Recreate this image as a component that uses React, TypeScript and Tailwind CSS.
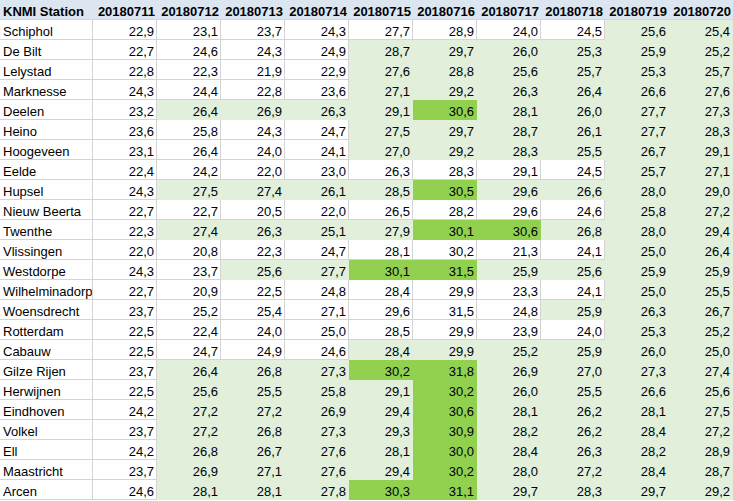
import React from 'react';

type Row = { name: string; values: string[]; fill: string };

const dates = ['20180711', '20180712', '20180713', '20180714', '20180715', '20180716', '20180717', '20180718', '20180719', '20180720'];

// W = no fill, L = light green (warm), G = bright green (>= 30)
const rows: Row[] = [
  { name: 'Schiphol', values: ['22,9', '23,1', '23,7', '24,3', '27,7', '28,9', '24,0', '24,5', '25,6', '25,4'], fill: 'WWWWWWWWLL' },
  { name: 'De Bilt', values: ['22,7', '24,6', '24,3', '24,9', '28,7', '29,7', '26,0', '25,3', '25,9', '25,2'], fill: 'WWWWLLLLLL' },
  { name: 'Lelystad', values: ['22,8', '22,3', '21,9', '22,9', '27,6', '28,8', '25,6', '25,7', '25,3', '25,7'], fill: 'WWWWLLLLLL' },
  { name: 'Marknesse', values: ['24,3', '24,4', '22,8', '23,6', '27,1', '29,2', '26,3', '26,4', '26,6', '27,6'], fill: 'WWWWLLLLLL' },
  { name: 'Deelen', values: ['23,2', '26,4', '26,9', '26,3', '29,1', '30,6', '28,1', '26,0', '27,7', '27,3'], fill: 'WLLLLGLLLL' },
  { name: 'Heino', values: ['23,6', '25,8', '24,3', '24,7', '27,5', '29,7', '28,7', '26,1', '27,7', '28,3'], fill: 'WWWWLLLLLL' },
  { name: 'Hoogeveen', values: ['23,1', '26,4', '24,0', '24,1', '27,0', '29,2', '28,3', '25,5', '26,7', '29,1'], fill: 'WWWWLLLLLL' },
  { name: 'Eelde', values: ['22,4', '24,2', '22,0', '23,0', '26,3', '28,3', '29,1', '24,5', '25,7', '27,1'], fill: 'WWWWWWWWLL' },
  { name: 'Hupsel', values: ['24,3', '27,5', '27,4', '26,1', '28,5', '30,5', '29,6', '26,6', '28,0', '29,0'], fill: 'WLLLLGLLLL' },
  { name: 'Nieuw Beerta', values: ['22,7', '22,7', '20,5', '22,0', '26,5', '28,2', '29,6', '24,6', '25,8', '27,2'], fill: 'WWWWWWWWLL' },
  { name: 'Twenthe', values: ['22,3', '27,4', '26,3', '25,1', '27,9', '30,1', '30,6', '26,8', '28,0', '29,4'], fill: 'WLLLLGGLLL' },
  { name: 'Vlissingen', values: ['22,0', '20,8', '22,3', '24,7', '28,1', '30,2', '21,3', '24,1', '25,0', '26,4'], fill: 'WWWWWWWWLL' },
  { name: 'Westdorpe', values: ['24,3', '23,7', '25,6', '27,7', '30,1', '31,5', '25,9', '25,6', '25,9', '25,9'], fill: 'WWLLGGLLLL' },
  { name: 'Wilhelminadorp', values: ['22,7', '20,9', '22,5', '24,8', '28,4', '29,9', '23,3', '24,1', '25,0', '25,5'], fill: 'WWWWWWWWLL' },
  { name: 'Woensdrecht', values: ['23,7', '25,2', '25,4', '27,1', '29,6', '31,5', '24,8', '25,9', '26,3', '26,7'], fill: 'WWWWWWWLLL' },
  { name: 'Rotterdam', values: ['22,5', '22,4', '24,0', '25,0', '28,5', '29,9', '23,9', '24,0', '25,3', '25,2'], fill: 'WWWWWWWWLL' },
  { name: 'Cabauw', values: ['22,5', '24,7', '24,9', '24,6', '28,4', '29,9', '25,2', '25,9', '26,0', '25,0'], fill: 'WWWWLLLLLL' },
  { name: 'Gilze Rijen', values: ['23,7', '26,4', '26,8', '27,3', '30,2', '31,8', '26,9', '27,0', '27,3', '27,4'], fill: 'WLLLGGLLLL' },
  { name: 'Herwijnen', values: ['22,5', '25,6', '25,5', '25,8', '29,1', '30,2', '26,0', '25,5', '26,6', '25,6'], fill: 'WLLLLGLLLL' },
  { name: 'Eindhoven', values: ['24,2', '27,2', '27,2', '26,9', '29,4', '30,6', '28,1', '26,2', '28,1', '27,5'], fill: 'WLLLLGLLLL' },
  { name: 'Volkel', values: ['23,7', '27,2', '26,8', '27,3', '29,3', '30,9', '28,2', '26,2', '28,4', '27,2'], fill: 'WLLLLGLLLL' },
  { name: 'Ell', values: ['24,2', '26,8', '26,7', '27,6', '28,1', '30,0', '28,4', '26,3', '28,2', '28,9'], fill: 'WLLLLGLLLL' },
  { name: 'Maastricht', values: ['23,7', '26,9', '27,1', '27,6', '29,4', '30,2', '28,0', '27,2', '28,4', '28,7'], fill: 'WLLLLGLLLL' },
  { name: 'Arcen', values: ['24,6', '28,1', '28,1', '27,8', '30,3', '31,1', '29,7', '28,3', '29,7', '29,2'], fill: 'WLLLGGLLLL' },
];

const fillClass: Record<string, string> = {
  W: 'bg-white border-r border-b border-[#d4d4d4]',
  L: 'bg-[#e2efda] border-r border-b border-[#e2efda]',
  G: 'bg-[#92d050] border-r border-b border-[#92d050]',
};

const App: React.FC = () => {
  return (
    <div className="min-h-screen bg-white">
      <div className="w-[734px] border-r border-[#d4d4d4] font-['Liberation_Sans',Arial,sans-serif] text-[13px] text-black">
        <div className="grid grid-cols-[93px_repeat(10,64px)]">
          {/* header */}
          <div className="h-[20px] bg-[#dce6f1] border-b border-[#d4d4d4] pl-[3px] pt-[4px] leading-[16px] font-bold whitespace-nowrap">
            KNMI Station
          </div>
          {dates.map((d) => (
            <div key={d} className="h-[20px] bg-[#dce6f1] border-b border-[#d4d4d4] pr-[2px] pt-[4px] leading-[16px] font-bold text-right whitespace-nowrap">
              {d}
            </div>
          ))}

          {/* data rows */}
          {rows.map((row) => (
            <React.Fragment key={row.name}>
              <div className="h-[20px] bg-white border-r border-b border-[#d4d4d4] pl-[3px] pt-[4px] leading-[16px] whitespace-nowrap overflow-hidden">
                {row.name}
              </div>
              {row.values.map((v, i) => (
                <div
                  key={i}
                  className={`h-[20px] pr-[2px] pt-[4px] leading-[16px] text-right ${fillClass[row.fill[i]]}`}
                >
                  {v}
                </div>
              ))}
            </React.Fragment>
          ))}
        </div>
      </div>
    </div>
  );
};

export default App;
